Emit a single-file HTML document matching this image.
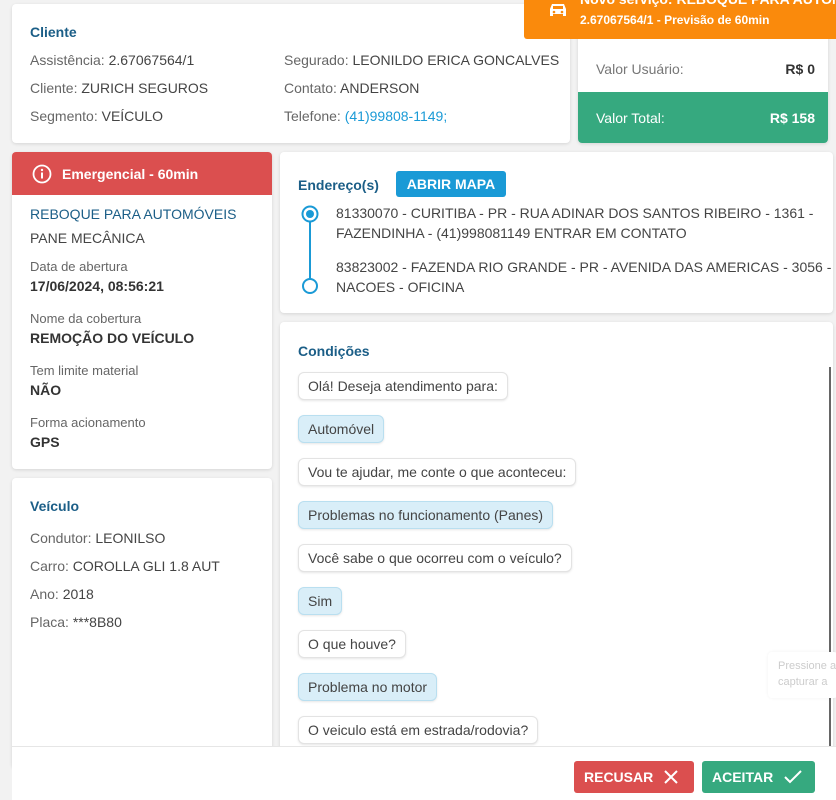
<!DOCTYPE html>
<html><head><meta charset="utf-8"><style>
*{box-sizing:border-box;margin:0;padding:0}
body{width:836px;height:800px;overflow:hidden;background:#f2f2f2;font-family:"Liberation Sans",sans-serif;font-size:14px;color:#444;position:relative}
.card{position:absolute;background:#fff;border-radius:4px;box-shadow:0 1px 3px rgba(0,0,0,.12)}
.t{position:absolute;white-space:nowrap}
.h{color:#1b5e87;font-weight:bold;font-size:14px}
.lbl{color:#666;font-size:13px}
.b{font-weight:bold;color:#333}
.bub{position:absolute;left:18px;height:28px;line-height:26px;padding:0 9px;border:1px solid #e3e3e3;border-radius:6px;background:#fff;box-shadow:0 1px 2px rgba(0,0,0,.1);font-size:14px;color:#444;white-space:nowrap}
.bub.s{background:#d9eef8;border-color:#b9dff0}
.btn{position:absolute;top:761px;height:32px;border-radius:3px;color:#fff;font-weight:bold;font-size:14px;line-height:32px;padding-left:10px}
</style></head><body>

<div class="card" style="left:12px;top:4px;width:558px;height:139px">
<div class="t h" style="left:18px;top:20px">Cliente</div>
<div class="t" style="left:18px;top:48px;color:#666">Assistência: <span style="color:#444">2.67067564/1</span></div>
<div class="t" style="left:18px;top:76px;color:#666">Cliente: <span style="color:#444">ZURICH SEGUROS</span></div>
<div class="t" style="left:18px;top:104px;color:#666">Segmento: <span style="color:#444">VEÍCULO</span></div>
<div class="t" style="left:272px;top:48px;color:#666">Segurado: <span style="color:#444">LEONILDO ERICA GONCALVES</span></div>
<div class="t" style="left:272px;top:76px;color:#666">Contato: <span style="color:#444">ANDERSON</span></div>
<div class="t" style="left:272px;top:104px;color:#666">Telefone: <span style="color:#1a9ad6">(41)99808-1149;</span></div>
</div>

<div class="card" style="left:578px;top:30px;width:250px;height:113px;overflow:hidden">
<div class="t" style="left:18px;top:31px;color:#777">Valor Usuário:</div>
<div class="t b" style="right:13px;top:31px">R$ 0</div>
<div style="position:absolute;left:0;top:62px;width:250px;height:51px;background:#36a97f"></div>
<div class="t" style="left:18px;top:80px;color:#fff">Valor Total:</div>
<div class="t" style="right:13px;top:80px;color:#fff;font-weight:bold">R$ 158</div>
</div>

<div style="position:absolute;left:524px;top:0;width:312px;height:39px;background:#fa8a0c;border-radius:0 0 0 3px">
<svg style="position:absolute;left:24px;top:2px" width="20" height="16" viewBox="0 0 20 16"><path d="M4 2h12l2 5v7h-3v-2H5v2H2V7z" fill="#fff"/><rect x="5" y="4" width="10" height="3" fill="#fa8a0c"/><circle cx="6" cy="10" r="1.3" fill="#fa8a0c"/><circle cx="14" cy="10" r="1.3" fill="#fa8a0c"/></svg>
<div class="t" style="left:56px;top:-9px;color:#fff;font-weight:bold;font-size:14px">Novo serviço: REBOQUE PARA AUTOM</div>
<div class="t" style="left:56px;top:13px;color:#fff;font-weight:bold;font-size:12px">2.67067564/1 - Previsão de 60min</div>
</div>

<div class="card" style="left:12px;top:152px;width:260px;height:317px;overflow:hidden">
<div style="position:absolute;left:0;top:0;width:260px;height:43px;background:#db4f4f"></div>
<svg style="position:absolute;left:20px;top:12px" width="20" height="20" viewBox="0 0 20 20"><circle cx="10" cy="10" r="8.5" fill="none" stroke="#fff" stroke-width="1.8"/><rect x="9" y="8.5" width="2" height="6" fill="#fff"/><circle cx="10" cy="6" r="1.2" fill="#fff"/></svg>
<div class="t" style="left:50px;top:14px;color:#fff;font-weight:bold">Emergencial - 60min</div>
<div class="t" style="left:18px;top:54px;color:#1b5e87">REBOQUE PARA AUTOMÓVEIS</div>
<div class="t" style="left:18px;top:78px">PANE MECÂNICA</div>
<div class="t lbl" style="left:18px;top:107px">Data de abertura</div>
<div class="t b" style="left:18px;top:126px">17/06/2024, 08:56:21</div>
<div class="t lbl" style="left:18px;top:159px">Nome da cobertura</div>
<div class="t b" style="left:18px;top:178px">REMOÇÃO DO VEÍCULO</div>
<div class="t lbl" style="left:18px;top:211px">Tem limite material</div>
<div class="t b" style="left:18px;top:230px">NÃO</div>
<div class="t lbl" style="left:18px;top:263px">Forma acionamento</div>
<div class="t b" style="left:18px;top:282px">GPS</div>
</div>

<div class="card" style="left:12px;top:478px;width:260px;height:290px">
<div class="t h" style="left:18px;top:20px">Veículo</div>
<div class="t" style="left:18px;top:52px;color:#666">Condutor: <span style="color:#444">LEONILSO</span></div>
<div class="t" style="left:18px;top:80px;color:#666">Carro: <span style="color:#444">COROLLA GLI 1.8 AUT</span></div>
<div class="t" style="left:18px;top:108px;color:#666">Ano: <span style="color:#444">2018</span></div>
<div class="t" style="left:18px;top:136px;color:#666">Placa: <span style="color:#444">***8B80</span></div>
</div>

<div class="card" style="left:280px;top:152px;width:553px;height:161px">
<div class="t h" style="left:18px;top:25px">Endereço(s)</div>
<div style="position:absolute;left:116px;top:19px;width:110px;height:26px;background:#1a9ad6;border-radius:3px;color:#fff;font-weight:bold;text-align:center;line-height:26px">ABRIR MAPA</div>
<svg style="position:absolute;left:20px;top:52px" width="20" height="92"><circle cx="10" cy="10" r="7.5" fill="none" stroke="#1a9ad6" stroke-width="2"/><circle cx="10" cy="10" r="4" fill="#1a9ad6"/><line x1="10" y1="18" x2="10" y2="75" stroke="#1a9ad6" stroke-width="2"/><circle cx="10" cy="82" r="7" fill="none" stroke="#1a9ad6" stroke-width="2"/></svg>
<div class="t" style="left:56px;top:53px">81330070 - CURITIBA - PR - RUA ADINAR DOS SANTOS RIBEIRO - 1361 -</div>
<div class="t" style="left:56px;top:73px">FAZENDINHA - (41)998081149 ENTRAR EM CONTATO</div>
<div class="t" style="left:56px;top:107px">83823002 - FAZENDA RIO GRANDE - PR - AVENIDA DAS AMERICAS - 3056 -</div>
<div class="t" style="left:56px;top:127px">NACOES - OFICINA</div>
</div>

<div class="card" style="left:280px;top:322px;width:553px;height:450px">
<div class="t h" style="left:18px;top:21px">Condições</div>
<div class="bub" style="top:50px">Olá! Deseja atendimento para:</div>
<div class="bub s" style="top:93px">Automóvel</div>
<div class="bub" style="top:136px">Vou te ajudar, me conte o que aconteceu:</div>
<div class="bub s" style="top:179px">Problemas no funcionamento (Panes)</div>
<div class="bub" style="top:222px">Você sabe o que ocorreu com o veículo?</div>
<div class="bub s" style="top:265px">Sim</div>
<div class="bub" style="top:308px">O que houve?</div>
<div class="bub s" style="top:351px">Problema no motor</div>
<div class="bub" style="top:394px">O veiculo está em estrada/rodovia?</div>
<div style="position:absolute;left:549px;top:45px;width:2px;height:380px;background:#666"></div>
<div style="position:absolute;left:488px;top:330px;width:70px;height:46px;background:#fff;border-radius:4px;box-shadow:0 0 3px rgba(0,0,0,.06);color:#ccc;font-size:11px;line-height:16px;padding:6px 0 0 10px;white-space:nowrap;overflow:hidden">Pressione a<br>capturar a</div>
</div>

<div style="position:absolute;left:12px;top:746px;width:824px;height:54px;background:#fff;border-top:1px solid #e6e6e6"></div>
<div class="btn" style="left:574px;width:120px;background:#db4f4f">RECUSAR
<svg style="position:absolute;left:90px;top:9px" width="14" height="14"><path d="M1 1L13 13M13 1L1 13" stroke="#fff" stroke-width="2"/></svg></div>
<div class="btn" style="left:702px;width:113px;background:#36a97f">ACEITAR
<svg style="position:absolute;left:82px;top:9px" width="18" height="14"><path d="M1 7l5 5L17 1" stroke="#fff" stroke-width="2" fill="none"/></svg></div>
</body></html>
